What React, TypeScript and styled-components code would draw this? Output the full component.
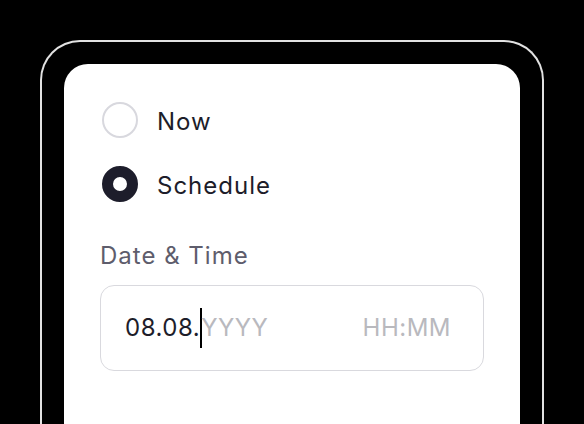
import styled, { createGlobalStyle } from "styled-components";

const GlobalStyle = createGlobalStyle`
  html, body {
    margin: 0;
    padding: 0;
    background: #000;
    overflow: hidden;
  }
  * {
    box-sizing: border-box;
  }
`;

const Page = styled.div`
  width: 584px;
  height: 424px;
  padding: 40px 40px 0 40px;
  overflow: hidden;
  background: #000;
  font-family: Inter, "Noto Sans", sans-serif;
  letter-spacing: 1px;
`;

const Device = styled.div`
  width: 504px;
  height: 420px;
  border: 2px solid #e2e2e2;
  border-bottom: none;
  border-radius: 40px 40px 0 0;
  padding: 22px 22px 0 22px;
`;

const Card = styled.div`
  height: 100%;
  background: #fff;
  border-radius: 24px 24px 0 0;
  padding: 38px 36px 0 36px;
`;

const RadioGroup = styled.div`
  display: flex;
  flex-direction: column;
  gap: 28px;
`;

const RadioRow = styled.label`
  display: flex;
  align-items: center;
  gap: 19px;
  padding-left: 2px;
  font-size: 24px;
  line-height: 28px;
  color: #1d1d2a;
  cursor: pointer;
`;

const RadioText = styled.span`
  padding-top: 3px;
`;

const RadioCircle = styled.span<{ $checked?: boolean }>`
  width: 36px;
  height: 36px;
  border-radius: 50%;
  flex-shrink: 0;
  border: ${(p) => (p.$checked ? "11px solid #1d1d2b" : "2px solid #d8d8de")};
  background: #fff;
`;

const FieldLabel = styled.div`
  margin-top: 40px;
  font-size: 24px;
  line-height: 28px;
  color: #5e5d6c;
`;

const InputBox = styled.div`
  margin-top: 15px;
  height: 86px;
  border: 1.5px solid #d9d9de;
  border-radius: 14px;
  display: flex;
  align-items: center;
  padding: 0 32px 0 24px;
  font-size: 24px;
  line-height: 28px;
  letter-spacing: 0.5px;
`;

const Typed = styled.span`
  color: #1d1d2a;
`;

const Caret = styled.span`
  display: inline-block;
  width: 2px;
  height: 40px;
  background: #000;
  margin-right: -1px;
`;

const Placeholder = styled.span`
  color: #b9b9be;
`;

const Spacer = styled.span`
  flex: 1;
`;

export default function App() {
  return (
    <Page>
      <GlobalStyle />
      <Device>
        <Card>
          <RadioGroup>
            <RadioRow>
              <RadioCircle />
              <RadioText>Now</RadioText>
            </RadioRow>
            <RadioRow>
              <RadioCircle $checked />
              <RadioText>Schedule</RadioText>
            </RadioRow>
          </RadioGroup>
          <FieldLabel>Date &amp; Time</FieldLabel>
          <InputBox>
            <Typed>08.08.</Typed>
            <Caret />
            <Placeholder>YYYY</Placeholder>
            <Spacer />
            <Placeholder>HH:MM</Placeholder>
          </InputBox>
        </Card>
      </Device>
    </Page>
  );
}
